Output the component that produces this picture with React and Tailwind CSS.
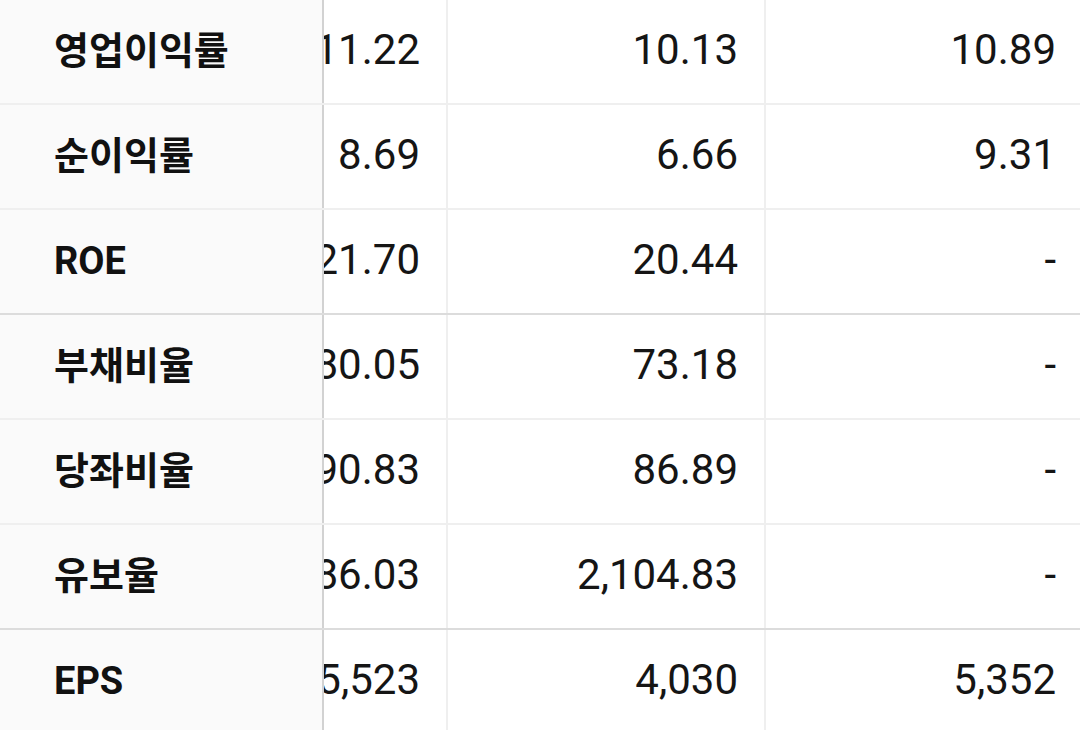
import React from 'react';

const rows = [
    { label: '영업이익률', values: ['11.22', '10.13', '10.89'] },
    { label: '순이익률', values: ['8.69', '6.66', '9.31'] },
    { label: 'ROE', values: ['21.70', '20.44', '-'], groupEnd: true },
    { label: '부채비율', values: ['80.05', '73.18', '-'] },
    { label: '당좌비율', values: ['190.83', '86.89', '-'] },
    { label: '유보율', values: ['2,386.03', '2,104.83', '-'], groupEnd: true },
    { label: 'EPS', values: ['5,523', '4,030', '5,352'] },
];

const FinanceTable = () => {
    return (
        <div className="w-[1080px] h-[730px] overflow-hidden bg-white" style={{ fontFamily: 'Roboto, "Noto Sans CJK KR", sans-serif' }}>
            {rows.map((row) => (
                <div
                    key={row.label}
                    className={`flex h-[105px] border-b-2 ${row.groupEnd ? 'border-[#dcdcdc]' : 'border-[#efefef]'}`}
                >
                    <div className="w-[324px] shrink-0 bg-[#fafafa] border-r-2 border-[#d2d2d2] flex items-center pl-[54px] pb-[1px] text-[38px] font-bold text-[#111]">
                        {row.label}
                    </div>
                    <div className="w-[124px] shrink-0 overflow-hidden flex items-center justify-end pr-[26px] pb-[4px] border-r-2 border-[#efefef] text-[42px] text-[#151515] whitespace-nowrap">
                        {row.values[0]}
                    </div>
                    <div className="w-[318px] shrink-0 flex items-center justify-end pr-[26px] pb-[4px] border-r-2 border-[#efefef] text-[42px] text-[#151515] whitespace-nowrap">
                        {row.values[1]}
                    </div>
                    <div className="flex-1 flex items-center justify-end pr-[24px] pb-[4px] text-[42px] text-[#151515] whitespace-nowrap">
                        {row.values[2]}
                    </div>
                </div>
            ))}
        </div>
    );
};

export default function App() {
    return <FinanceTable />;
}
